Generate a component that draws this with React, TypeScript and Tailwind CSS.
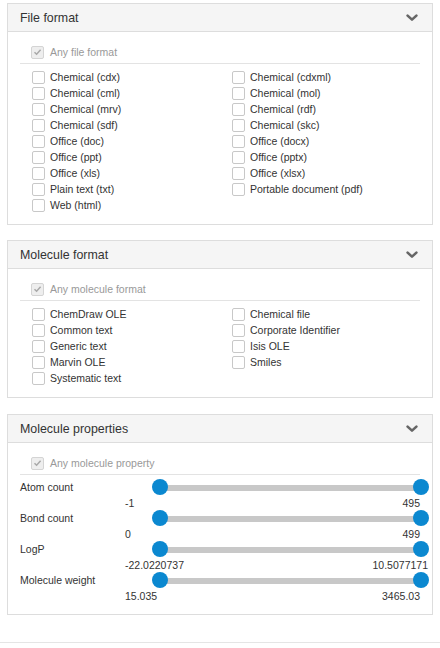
import React from 'react';

type Option = {label: string};

const fileFormats = [
  'Chemical (cdx)',
  'Chemical (cdxml)',
  'Chemical (cml)',
  'Chemical (mol)',
  'Chemical (mrv)',
  'Chemical (rdf)',
  'Chemical (sdf)',
  'Chemical (skc)',
  'Office (doc)',
  'Office (docx)',
  'Office (ppt)',
  'Office (pptx)',
  'Office (xls)',
  'Office (xlsx)',
  'Plain text (txt)',
  'Portable document (pdf)',
  'Web (html)',
];

const moleculeFormats = [
  'ChemDraw OLE',
  'Chemical file',
  'Common text',
  'Corporate Identifier',
  'Generic text',
  'Isis OLE',
  'Marvin OLE',
  'Smiles',
  'Systematic text',
];

const properties = [
  {label: 'Atom count', min: '-1', max: '495', overflow: false},
  {label: 'Bond count', min: '0', max: '499', overflow: false},
  {label: 'LogP', min: '-22.0220737', max: '10.5077171', overflow: true},
  {label: 'Molecule weight', min: '15.035', max: '3465.03', overflow: false},
];

function Chevron() {
  return (
    <svg width="12" height="8" viewBox="0 0 12 8" className="mr-[2px]">
      <polyline
        points="1.6,1.6 6,5.6 10.4,1.6"
        fill="none"
        stroke="#666666"
        strokeWidth="2.6"
        strokeLinecap="round"
        strokeLinejoin="round"
      />
    </svg>
  );
}

function Panel({title, children}: {title: string; children: React.ReactNode}) {
  return (
    <div className="mx-[7px] border border-[#dddddd] bg-white">
      <div className="flex h-[28px] items-center justify-between border-b border-[#dddddd] bg-[#f5f5f5] px-[12px]">
        <span className="text-[12.4px] text-[#333333]">{title}</span>
        <Chevron />
      </div>
      <div className="px-[12px] pt-[12px] pb-[11px]">{children}</div>
    </div>
  );
}

function AnyRow({label}: {label: string}) {
  return (
    <div className="border-b border-[#e3e3e3] pb-[3px]">
      <div className="flex h-4 items-center pl-[11px]">
        <span className="flex h-[13px] w-[13px] items-center justify-center rounded-[2px] border border-[#d4d4d4] bg-[#eeeeee]">
          <svg width="9" height="8" viewBox="0 0 9 8">
            <polyline
              points="1.5,4.2 3.6,6.2 7.6,1.8"
              fill="none"
              stroke="#a8a8a8"
              strokeWidth="1.5"
            />
          </svg>
        </span>
        <span className="ml-[6px] text-[#999999]">{label}</span>
      </div>
    </div>
  );
}

function CheckItem({label}: Option) {
  return (
    <div className="flex h-4 items-center pl-[12px]">
      <span className="h-[13px] w-[13px] shrink-0 rounded-[2px] border border-[#c8c8c8] bg-white" />
      <span className="ml-[5px] text-[#333333]">{label}</span>
    </div>
  );
}

function CheckGrid({items}: {items: string[]}) {
  return (
    <div className="mt-[5px] grid grid-cols-2">
      {items.map((label) => (
        <CheckItem key={label} label={label} />
      ))}
    </div>
  );
}

function RangeRow({label, min, max, overflow}: (typeof properties)[number]) {
  return (
    <div>
      <div className="flex h-4 items-center">
        <span className="w-[105px] shrink-0 text-[#333333]">{label}</span>
        <div className="relative -mr-[9px] ml-[27px] h-4 flex-1">
          <div className="absolute left-2 right-2 top-[6px] h-[6px] bg-[#c8c8c8]" />
          <span className="absolute left-0 top-0 h-4 w-4 rounded-full bg-[#0b88d0]" />
          <span className="absolute right-0 top-0 h-4 w-4 rounded-full bg-[#0b88d0]" />
        </div>
      </div>
      <div className="flex h-[15px] items-center justify-between pl-[105px] pt-px">
        <span className="text-[#333333]">{min}</span>
        <span className={overflow ? '-mr-2 text-[#333333]' : 'text-[#333333]'}>{max}</span>
      </div>
    </div>
  );
}

export default function App() {
  return (
    <div className="min-h-[648px] bg-white pt-[3px] font-['Liberation_Sans',Arial,sans-serif] text-[10.5px] leading-4">
      <Panel title="File format">
        <AnyRow label="Any file format" />
        <CheckGrid items={fileFormats} />
      </Panel>
      <div className="h-[15px]" />
      <Panel title="Molecule format">
        <AnyRow label="Any molecule format" />
        <CheckGrid items={moleculeFormats} />
      </Panel>
      <div className="h-4" />
      <Panel title="Molecule properties">
        <AnyRow label="Any molecule property" />
        <div className="mt-[4px]">
          {properties.map((p) => (
            <RangeRow key={p.label} {...p} />
          ))}
        </div>
      </Panel>
      <div className="mt-[27px] border-t border-[#e5e5e5]" />
    </div>
  );
}
